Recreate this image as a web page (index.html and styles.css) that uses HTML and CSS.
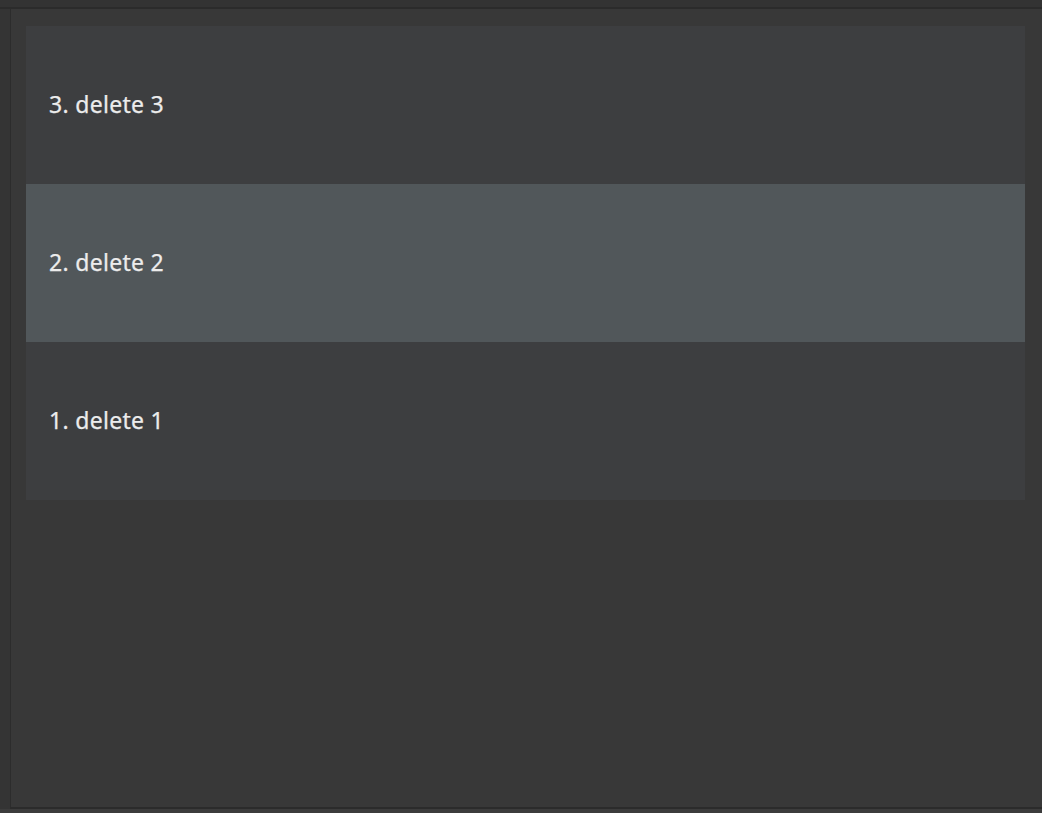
FILE: index.html
```html
<!DOCTYPE html>
<html>
<head>
<meta charset="utf-8">
<link rel="stylesheet" href="styles.css">
</head>
<body>
<div class="top"></div>
<div class="frame">
  <ul class="list">
    <li class="row">3. delete 3</li>
    <li class="row selected">2. delete 2</li>
    <li class="row">1. delete 1</li>
  </ul>
</div>
<div class="bottom"></div>
</body>
</html>
```
FILE: styles.css
```css
html, body {
  margin: 0;
  padding: 0;
  height: 100%;
  overflow: hidden;
}
body {
  background: #343434;
  font-family: "Noto Sans", "Open Sans", sans-serif;
  display: flex;
  flex-direction: column;
}
.top {
  height: 7px;
  background: #333333;
  border-bottom: 2px solid #2b2b2b;
  flex: none;
}
.frame {
  flex: 1;
  margin-left: 10px;
  border-left: 1px solid #2c2c2c;
  border-bottom: 2px solid #2b2b2b;
  background: #383838;
  padding: 17px 17px 0 15px;
}
.bottom {
  height: 4px;
  background: #3c3c3c;
  flex: none;
}
.list {
  list-style: none;
  margin: 0;
  padding: 0;
  background: #3d3e40;
}
.row {
  height: 158px;
  display: flex;
  align-items: center;
  padding: 0 0 3px 23px;
  font-size: 23px;
  font-weight: 400;
  letter-spacing: 0.3px;
  color: #ececec;
  box-sizing: border-box;
  -webkit-text-stroke: 0.25px #ececec;
}
.row.selected {
  background: #51575a;
}
```
